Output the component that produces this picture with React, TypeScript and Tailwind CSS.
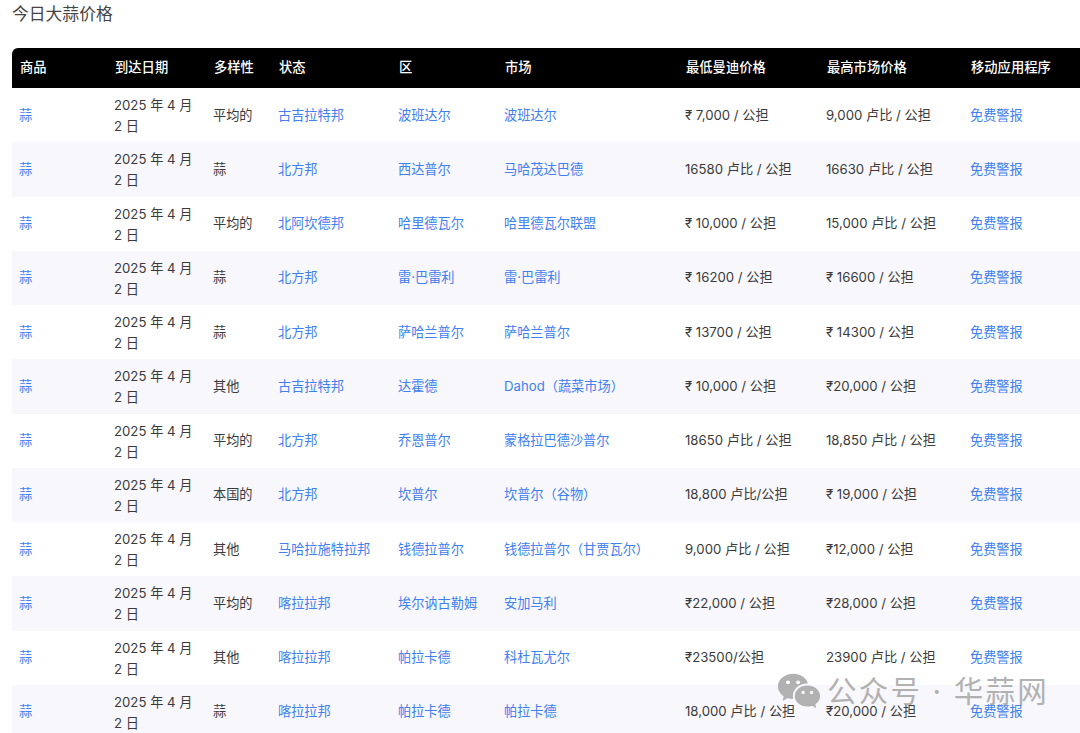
import { RiWechatFill } from 'react-icons/ri';

const rows = [
  ['平均的', '古吉拉特邦', '波班达尔', '波班达尔', '₹ 7,000 / 公担', '9,000 卢比 / 公担'],
  ['蒜', '北方邦', '西达普尔', '马哈茂达巴德', '16580 卢比 / 公担', '16630 卢比 / 公担'],
  ['平均的', '北阿坎德邦', '哈里德瓦尔', '哈里德瓦尔联盟', '₹ 10,000 / 公担', '15,000 卢比 / 公担'],
  ['蒜', '北方邦', '雷·巴雷利', '雷·巴雷利', '₹ 16200 / 公担', '₹ 16600 / 公担'],
  ['蒜', '北方邦', '萨哈兰普尔', '萨哈兰普尔', '₹ 13700 / 公担', '₹ 14300 / 公担'],
  ['其他', '古吉拉特邦', '达霍德', 'Dahod（蔬菜市场）', '₹ 10,000 / 公担', '₹20,000 / 公担'],
  ['平均的', '北方邦', '乔恩普尔', '蒙格拉巴德沙普尔', '18650 卢比 / 公担', '18,850 卢比 / 公担'],
  ['本国的', '北方邦', '坎普尔', '坎普尔（谷物）', '18,800 卢比/公担', '₹ 19,000 / 公担'],
  ['其他', '马哈拉施特拉邦', '钱德拉普尔', '钱德拉普尔（甘贾瓦尔）', '9,000 卢比 / 公担', '₹12,000 / 公担'],
  ['平均的', '喀拉拉邦', '埃尔讷古勒姆', '安加马利', '₹22,000 / 公担', '₹28,000 / 公担'],
  ['其他', '喀拉拉邦', '帕拉卡德', '科杜瓦尤尔', '₹23500/公担', '23900 卢比 / 公担'],
  ['蒜', '喀拉拉邦', '帕拉卡德', '帕拉卡德', '18,000 卢比 / 公担', '₹20,000 / 公担'],
];

const headers = ['商品', '到达日期', '多样性', '状态', '区', '市场', '最低曼迪价格', '最高市场价格', '移动应用程序'];
const widths = ['w-[95px]', 'w-[99px]', 'w-[65px]', 'w-[120px]', 'w-[106px]', 'w-[181px]', 'w-[141px]', 'w-[144px]', 'w-[117px]'];

function Cell({ children, link }: { children: React.ReactNode; link?: boolean }) {
  return (
    <td className={`px-[7px] py-0 align-middle ${link ? 'text-[#4080f0]' : 'text-[#3a3a3a]'}`}>
      {children}
    </td>
  );
}

export default function App() {
  return (
    <div className="relative h-[733px] w-[1080px] overflow-hidden bg-white font-['Inter','Noto_Sans_CJK_SC',sans-serif]">
      <h2 className="pl-3 pt-[2px] text-[16.8px] leading-[24px] font-normal text-[#444]">今日大蒜价格</h2>

      {/* Price table */}
      <div className="ml-3 mt-[22px] w-[1085px] overflow-hidden rounded-t-md">
        <table className="w-[1068px] table-fixed border-collapse text-[13.2px] leading-[21px]">
          <thead>
            <tr className="h-[40px] bg-black text-[13.3px] text-white">
              {headers.map((h, i) => (
                <th key={h} className={`${widths[i]} px-2 pb-[2px] text-left font-medium`}>{h}</th>
              ))}
            </tr>
          </thead>
          <tbody>
            {rows.map((r, i) => (
              <tr key={i} className={`h-[54.25px] ${i % 2 === 1 ? 'bg-[#f7f7fc]' : 'bg-white'}`}>
                <Cell link>蒜</Cell>
                <td className="px-[7px] pt-[2px] pb-0 align-middle text-[#3a3a3a]">2025 年 4 月<br />2 日</td>
                <Cell>{r[0]}</Cell>
                <Cell link>{r[1]}</Cell>
                <Cell link>{r[2]}</Cell>
                <Cell link>{r[3]}</Cell>
                <Cell>{r[4]}</Cell>
                <Cell>{r[5]}</Cell>
                <Cell link>免费警报</Cell>
              </tr>
            ))}
          </tbody>
        </table>
      </div>

      {/* WeChat watermark */}
      <div className="absolute left-[776px] top-[668px] flex items-center gap-[5px] text-[#a8a8a8]/90">
        <RiWechatFill className="h-[46px] w-[46px]" />
        <span className="text-[29.5px] leading-[44px] font-normal tracking-[2.2px]">公众号 · 华蒜网</span>
      </div>
    </div>
  );
}
